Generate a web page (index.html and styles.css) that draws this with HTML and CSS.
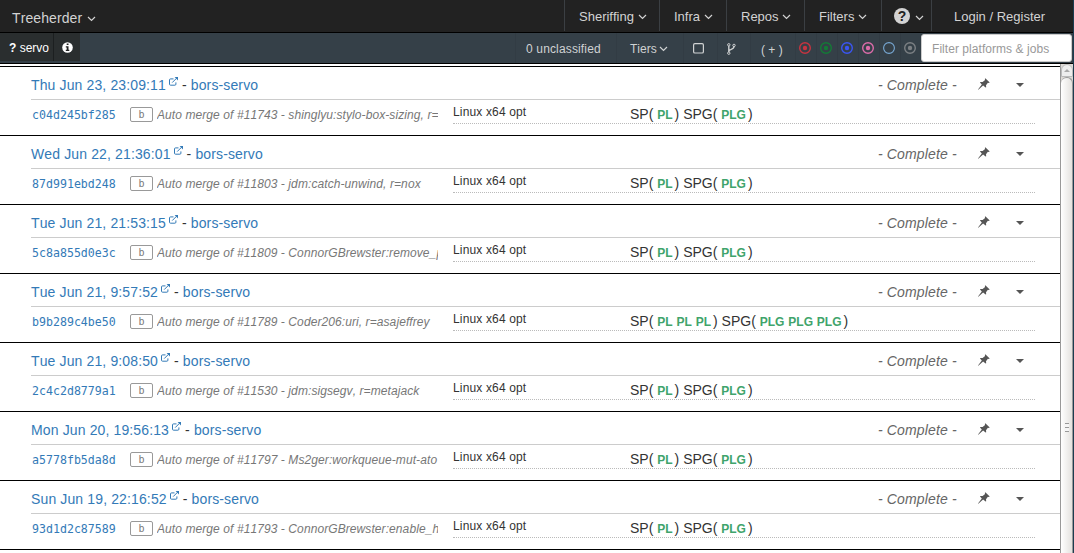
FILE: index.html
```html
<!DOCTYPE html>
<html lang="en">
<head>
<meta charset="utf-8">
<title>Treeherder</title>
<link rel="stylesheet" href="styles.css">
</head>
<body>
<svg class="symbols" width="0" height="0">
  <symbol id="chevron" viewBox="0 0 9 6"><path d="M1 1l3.5 3.5L8 1" fill="none" stroke="currentColor" stroke-width="1.2"/></symbol>
  <symbol id="external" viewBox="0 0 9 9"><path d="M4.5 1.9H1.5Q.5 1.9.5 2.9V7.2Q.5 8.2 1.5 8.2H5.9Q6.9 8.2 6.9 7.2V5.4M3.2 5.6L7.6 1.2" fill="none" stroke="currentColor"/><path d="M5.6 0H9V3.4z" fill="currentColor"/></symbol>
  <symbol id="pin" viewBox="0 0 12 12"><path d="M7.3.3L11.7 4.4 10.9 5 9.9 4.8 8 7.2 8.2 9.3 7.6 9.6 5.1 7.6.3 11.8 0 11.5 3.8 6.5 2 4.5 2.4 4 4.6 3.9 7.1 2 6.8.9z" fill="currentColor"/></symbol>
  <symbol id="target" viewBox="0 0 12 12"><circle cx="6" cy="6" r="5.3" fill="none" stroke="currentColor" stroke-width="1.4"/><circle cx="6" cy="6" r="2.2" fill="currentColor"/></symbol>
</svg>
<div class="app">
  <nav class="topbar">
    <div class="brand">Treeherder <svg class="chev"><use href="#chevron"/></svg></div>
    <div class="menu sheriffing">Sheriffing <svg class="chev"><use href="#chevron"/></svg></div>
    <div class="menu infra">Infra <svg class="chev"><use href="#chevron"/></svg></div>
    <div class="menu repos">Repos <svg class="chev"><use href="#chevron"/></svg></div>
    <div class="menu filters">Filters <svg class="chev"><use href="#chevron"/></svg></div>
    <div class="menu help"><span class="question">?</span><svg class="chev"><use href="#chevron"/></svg></div>
    <div class="menu login">Login / Register</div>
  </nav>
  <div class="filterbar">
    <div class="repo"><b>?</b> servo</div>
    <div class="info"><svg width="11" height="11" viewBox="0 0 11 11"><circle cx="5.5" cy="5.5" r="5.3" fill="#fff"/><path d="M4.7 1.5h1.8v1.6H4.7zM3.8 4.2h2.7v3.6h.8V9H3.8V7.8h.9V5.4h-.9z" fill="#222"/></svg></div>
    <div class="tool unclassified">0 unclassified</div>
    <div class="tool tiers">Tiers <svg class="chev"><use href="#chevron"/></svg></div>
    <div class="tool box"><svg width="11" height="11" viewBox="0 0 11 11"><rect x=".6" y=".6" width="9.8" height="9.4" rx="1.3" fill="none" stroke="currentColor" stroke-width="1.2"/></svg></div>
    <div class="tool fork"><svg width="9" height="12" viewBox="0 0 9 12"><g fill="none" stroke="currentColor"><circle cx="1.8" cy="1.8" r="1.2"/><circle cx="7" cy="2.4" r="1.2"/><circle cx="1.8" cy="10.2" r="1.2"/><path d="M1.8 3v6M7 3.6C7 7.2 1.8 5.6 1.8 8.6" stroke-width="1.4"/></g></svg></div>
    <div class="tool plus">( + )</div>
    <div class="dot red"><svg><use href="#target"/></svg></div>
    <div class="dot green"><svg><use href="#target"/></svg></div>
    <div class="dot blue"><svg><use href="#target"/></svg></div>
    <div class="dot pink"><svg><use href="#target"/></svg></div>
    <div class="dot sky"><svg viewBox="0 0 12 12"><circle cx="6" cy="6" r="5.4" fill="none" stroke="currentColor" stroke-width="1.1"/></svg></div>
    <div class="dot gray"><svg><use href="#target"/></svg></div>
    <div class="search">Filter platforms &amp; jobs</div>
  </div>
  <div class="body">
    <main class="pushes">
      <section class="push">
        <header><span class="title"><a>Thu Jun 23, 23:09:11<svg class="ext"><use href="#external"/></svg></a> - <a>bors-servo</a></span><i class="status">- Complete -</i><svg class="pin"><use href="#pin"/></svg><span class="caret"></span></header>
        <div class="detail"><a class="hash">c04d245bf285</a><span class="author">b</span><i class="message">Auto merge of #11743 - shinglyu:stylo-box-sizing, r=</i><div class="jobs"><span class="platform">Linux x64 opt</span><span class="groups">SP( <b>PL</b><span class="close">)</span> SPG( <b>PLG</b><span class="close">)</span></span></div></div>
      </section>
      <section class="push">
        <header><span class="title"><a>Wed Jun 22, 21:36:01<svg class="ext"><use href="#external"/></svg></a> - <a>bors-servo</a></span><i class="status">- Complete -</i><svg class="pin"><use href="#pin"/></svg><span class="caret"></span></header>
        <div class="detail"><a class="hash">87d991ebd248</a><span class="author">b</span><i class="message">Auto merge of #11803 - jdm:catch-unwind, r=nox</i><div class="jobs"><span class="platform">Linux x64 opt</span><span class="groups">SP( <b>PL</b><span class="close">)</span> SPG( <b>PLG</b><span class="close">)</span></span></div></div>
      </section>
      <section class="push">
        <header><span class="title"><a>Tue Jun 21, 21:53:15<svg class="ext"><use href="#external"/></svg></a> - <a>bors-servo</a></span><i class="status">- Complete -</i><svg class="pin"><use href="#pin"/></svg><span class="caret"></span></header>
        <div class="detail"><a class="hash">5c8a855d0e3c</a><span class="author">b</span><i class="message">Auto merge of #11809 - ConnorGBrewster:remove_p</i><div class="jobs"><span class="platform">Linux x64 opt</span><span class="groups">SP( <b>PL</b><span class="close">)</span> SPG( <b>PLG</b><span class="close">)</span></span></div></div>
      </section>
      <section class="push">
        <header><span class="title"><a>Tue Jun 21, 9:57:52<svg class="ext"><use href="#external"/></svg></a> - <a>bors-servo</a></span><i class="status">- Complete -</i><svg class="pin"><use href="#pin"/></svg><span class="caret"></span></header>
        <div class="detail"><a class="hash">b9b289c4be50</a><span class="author">b</span><i class="message">Auto merge of #11789 - Coder206:uri, r=asajeffrey</i><div class="jobs"><span class="platform">Linux x64 opt</span><span class="groups">SP( <b>PL</b> <b>PL</b> <b>PL</b><span class="close">)</span> SPG( <b>PLG</b> <b>PLG</b> <b>PLG</b><span class="close">)</span></span></div></div>
      </section>
      <section class="push">
        <header><span class="title"><a>Tue Jun 21, 9:08:50<svg class="ext"><use href="#external"/></svg></a> - <a>bors-servo</a></span><i class="status">- Complete -</i><svg class="pin"><use href="#pin"/></svg><span class="caret"></span></header>
        <div class="detail"><a class="hash">2c4c2d8779a1</a><span class="author">b</span><i class="message">Auto merge of #11530 - jdm:sigsegv, r=metajack</i><div class="jobs"><span class="platform">Linux x64 opt</span><span class="groups">SP( <b>PL</b><span class="close">)</span> SPG( <b>PLG</b><span class="close">)</span></span></div></div>
      </section>
      <section class="push">
        <header><span class="title"><a>Mon Jun 20, 19:56:13<svg class="ext"><use href="#external"/></svg></a> - <a>bors-servo</a></span><i class="status">- Complete -</i><svg class="pin"><use href="#pin"/></svg><span class="caret"></span></header>
        <div class="detail"><a class="hash">a5778fb5da8d</a><span class="author">b</span><i class="message">Auto merge of #11797 - Ms2ger:workqueue-mut-ato</i><div class="jobs"><span class="platform">Linux x64 opt</span><span class="groups">SP( <b>PL</b><span class="close">)</span> SPG( <b>PLG</b><span class="close">)</span></span></div></div>
      </section>
      <section class="push">
        <header><span class="title"><a>Sun Jun 19, 22:16:52<svg class="ext"><use href="#external"/></svg></a> - <a>bors-servo</a></span><i class="status">- Complete -</i><svg class="pin"><use href="#pin"/></svg><span class="caret"></span></header>
        <div class="detail"><a class="hash">93d1d2c87589</a><span class="author">b</span><i class="message">Auto merge of #11793 - ConnorGBrewster:enable_h</i><div class="jobs"><span class="platform">Linux x64 opt</span><span class="groups">SP( <b>PL</b><span class="close">)</span> SPG( <b>PLG</b><span class="close">)</span></span></div></div>
      </section>
      <section class="push"></section>
    </main>
    <div class="scrollbar"><div class="up"></div><div class="thumb"><span class="grip"></span></div></div>
  </div>
</div>
</body>
</html>
```
FILE: styles.css
```css
* { box-sizing: border-box; }
body { margin: 0; background: #fff; color: #333; font: 14px/20px "Liberation Sans", Arial, sans-serif; font-kerning: none; }
.symbols { position: absolute; }
.app { width: 1074px; height: 553px; display: flex; flex-direction: column; overflow: hidden; border-right: 1px solid #1c3d50; }
.topbar { height: 33px; flex: none; display: flex; background: #222; border-bottom: 1px solid #000; color: #d3d3d3; white-space: nowrap; }
.chev { width: 9px; height: 6px; margin-left: 1px; vertical-align: 1px; }
.brand { flex: 1; padding: 8px 0 0 12px; letter-spacing: .1px; }
.menu { height: 31px; padding: 7px 0 0 14px; border-left: 1px solid #3b3f43; font-size: 13px; }
.menu .chev { margin-left: 0; }
.sheriffing { width: 95px; }
.infra { width: 67px; }
.repos { width: 78px; }
.filters { width: 77px; }
.help { width: 50px; padding-left: 12px; display: flex; align-items: flex-start; }
.help .chev { margin: 8px 0 0 5px; }
.question { width: 16px; height: 16px; margin-top: 1px; border-radius: 50%; background: #d3d3d3; color: #222; font: bold 14px/16px "Liberation Sans", sans-serif; text-align: center; }
.login { width: 142px; padding-left: 22px; }
.filterbar { height: 31px; flex: none; display: flex; background: #354048; border-bottom: 1px solid #000; color: #d0d2d3; font-size: 12px; white-space: nowrap; padding-right: 1px; }
.repo { width: 54px; height: 28px; background: #2a2e2f; border-right: 1px solid #1c1f20; color: #fff; padding: 5px 0 0 9px; }
.info { width: 26px; height: 28px; background: #2a2e2f; padding: 9px 0 0 8px; line-height: 0; }
.tool { border-left: 1px solid #323c44; padding-top: 6px; }
.unclassified { width: 101px; margin-left: 435px; padding-left: 10px; letter-spacing: .15px; }
.tiers { width: 67px; padding-left: 13px; }
.tiers .chev { margin-left: -1px; }
.box { width: 34px; padding: 10px 0 0 9px; line-height: 0; }
.fork { width: 33px; padding: 10px 0 0 9px; line-height: 0; }
.plus { width: 45px; padding: 7px 0 0 10px; }
.dot { width: 21px; padding: 9px 0 0 3px; line-height: 0; border-left: 1px solid #323c44; }
.dot svg { width: 12px; height: 12px; }
.red { color: #c83440; }
.green { color: #137b36; }
.blue { color: #3a56f5; }
.pink { color: #dd6caa; }
.sky { color: #78a9d5; }
.gray { color: #7c8084; }
.search { flex: 1; height: 28px; margin-top: 1px; border: 1px solid #ccc; border-radius: 3px; background: #fff; color: #999; padding: 4px 0 0 10px; letter-spacing: .05px; }
.body { flex: 1; display: flex; min-height: 0; }
.pushes { width: 1060px; padding-top: 2px; overflow: hidden; }
.push { height: 69px; border-top: 1px solid #000; padding-left: 31px; }
.push a { color: #337ab7; }
.push header { height: 33px; border-bottom: 1px solid #ccc; display: flex; padding-top: 8px; white-space: nowrap; }
.title { width: 847px; letter-spacing: .13px; }
.ext { width: 9px; height: 9px; margin-left: 3px; vertical-align: 4px; }
.status { width: 100px; color: #666; letter-spacing: .15px; }
.pin { width: 12px; height: 12px; margin-top: 3px; color: #555; }
.caret { margin: 8px 0 0 26px; width: 8px; height: 4px; background: #555; clip-path: polygon(0 0, 100% 0, 50% 100%); }
.detail { display: flex; white-space: nowrap; }
.hash { width: 99px; padding: 5px 0 0 1px; font: 11.6px/20px "DejaVu Sans Mono", monospace; }
.author { width: 23px; height: 15px; margin: 7px 4px 0 0; border: 1px solid #999; border-radius: 2px; color: #777; font: 10px/14px "DejaVu Sans Mono", monospace; text-align: center; }
.message { width: 281px; margin-right: 15px; padding-top: 5px; overflow: hidden; font-size: 12px; color: #777; letter-spacing: .085px; }
.jobs { width: 582px; height: 24px; border-bottom: 1px dotted #bbb; display: flex; }
.platform { width: 177px; font-size: 12px; padding-top: 2px; letter-spacing: .15px; }
.groups { padding-top: 4px; }
.groups b { color: #40a46b; font-size: 12px; }
.close { margin-left: 2px; }
.scrollbar { width: 13px; background: #ddd9d5; border-left: 1px solid #999; display: flex; flex-direction: column; }
.up { height: 13px; border: 1px solid #bbb; border-radius: 6px 6px 0 0; background: #eee; display: grid; place-items: center; }
.up::before { content: ""; width: 6px; height: 3px; background: #aaa; clip-path: polygon(50% 0, 100% 100%, 0 100%); }
.thumb { flex: 1; border: 1px solid #999; border-left: 0; border-bottom: 0; border-radius: 6px 6px 0 0; background: linear-gradient(90deg, #fff, #e4e2df); padding: 345px 0 0 4px; }
.grip { display: block; width: 4px; height: 9px; background: repeating-linear-gradient(#999 0 1px, #f5f5f5 1px 4px); }
```
